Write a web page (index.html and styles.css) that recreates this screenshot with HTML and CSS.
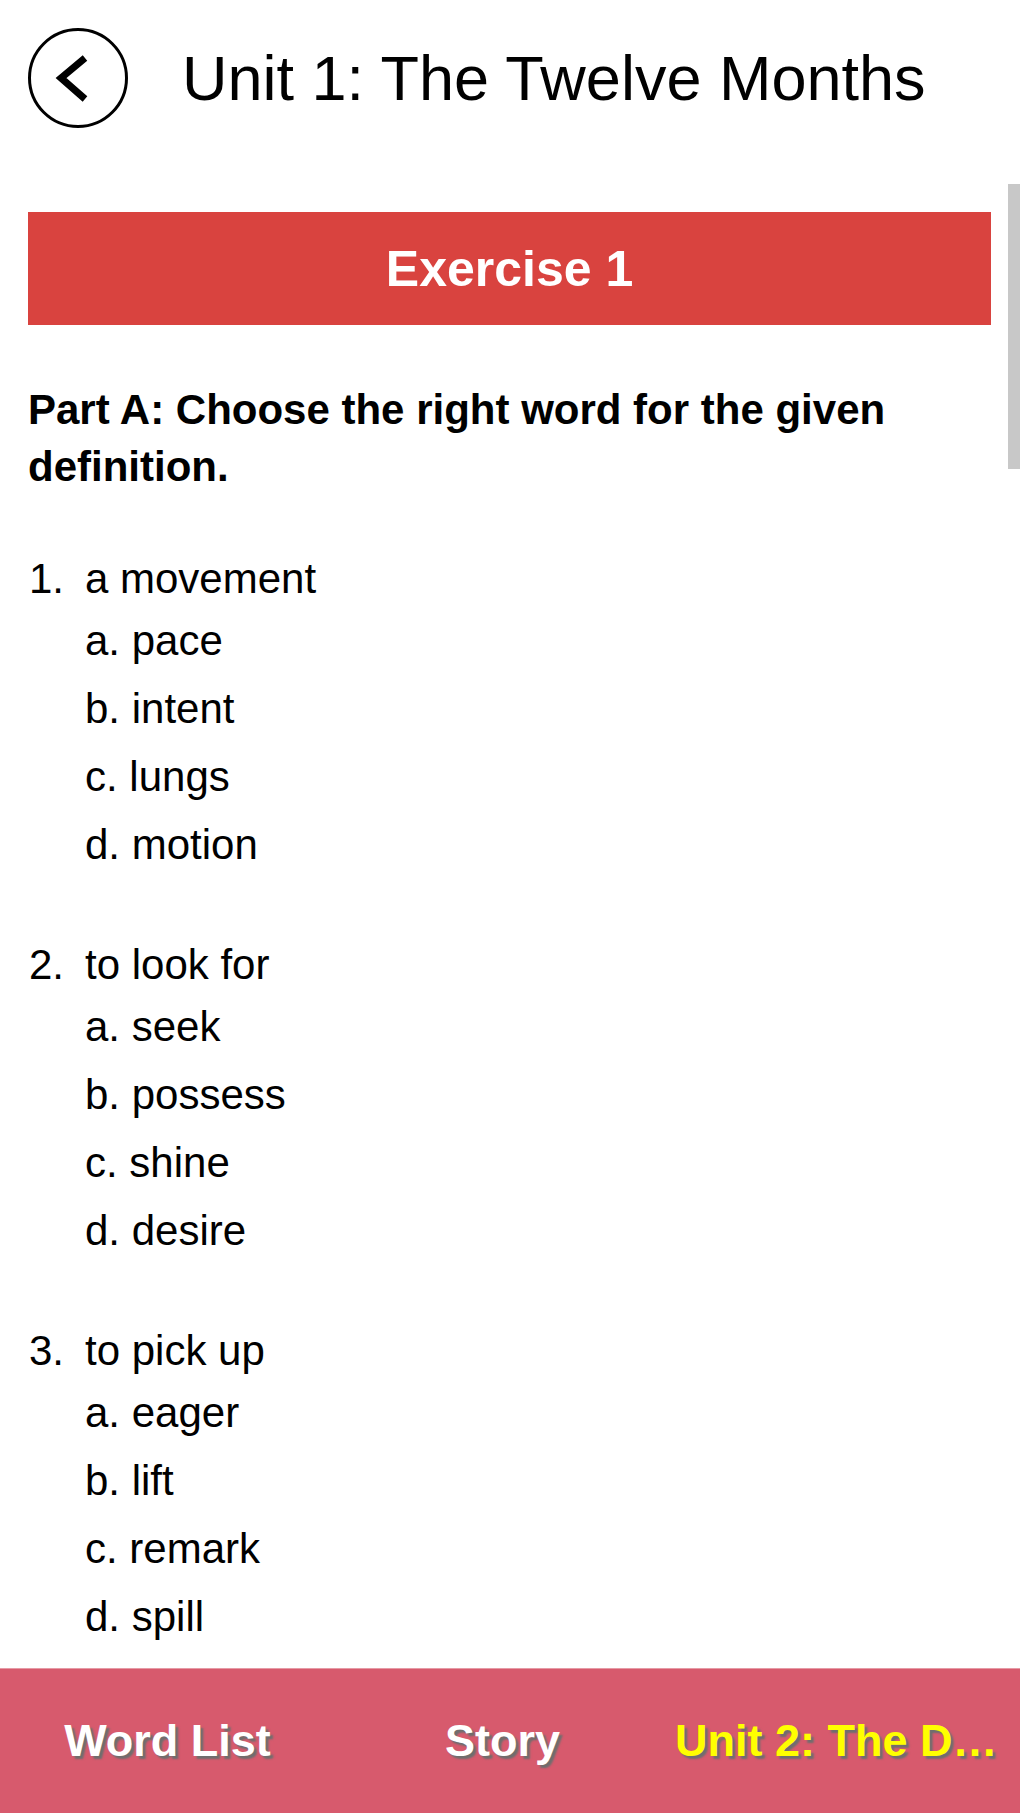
FILE: index.html
```html
<!DOCTYPE html>
<html lang="en">
<head>
<meta charset="utf-8">
<title>Unit 1: The Twelve Months</title>
<link rel="stylesheet" href="styles.css">
</head>
<body>
<div class="app">
  <header class="topbar">
    <button class="back" aria-label="Back">
      <svg viewBox="0 0 100 100" width="100" height="100">
        <circle cx="50" cy="50" r="48.5" fill="none" stroke="#000" stroke-width="3"/>
        <polyline points="57,30 33,50 57,71" fill="none" stroke="#000" stroke-width="7" stroke-linecap="butt" stroke-linejoin="miter"/>
      </svg>
    </button>
    <h1 class="title">Unit 1: The Twelve Months</h1>
  </header>

  <main class="content">
    <div class="scroll-thumb"></div>
    <div class="banner">Exercise 1</div>
    <p class="instructions">Part A: Choose the right word for the given definition.</p>

    <div class="question">
      <div class="q-line"><span class="num">1.</span><span>a movement</span></div>
      <div class="opt">a. pace</div>
      <div class="opt">b. intent</div>
      <div class="opt">c. lungs</div>
      <div class="opt">d. motion</div>
    </div>

    <div class="question">
      <div class="q-line"><span class="num">2.</span><span>to look for</span></div>
      <div class="opt">a. seek</div>
      <div class="opt">b. possess</div>
      <div class="opt">c. shine</div>
      <div class="opt">d. desire</div>
    </div>

    <div class="question">
      <div class="q-line"><span class="num">3.</span><span>to pick up</span></div>
      <div class="opt">a. eager</div>
      <div class="opt">b. lift</div>
      <div class="opt">c. remark</div>
      <div class="opt">d. spill</div>
    </div>
  </main>

  <nav class="tabbar">
    <div class="tab">Word List</div>
    <div class="tab">Story</div>
    <div class="tab next">Unit 2: The D…</div>
  </nav>
</div>
</body>
</html>
```

FILE: styles.css
```css
* {
  box-sizing: border-box;
}

html, body {
  margin: 0;
  padding: 0;
  background: #fff;
}

body {
  font-family: "Liberation Sans", Arial, sans-serif;
  color: #000;
}

.app {
  width: 1020px;
  height: 1813px;
  display: flex;
  flex-direction: column;
  overflow: hidden;
}

.topbar {
  height: 184px;
  flex: none;
  display: flex;
  align-items: flex-start;
  padding: 28px 0 0 28px;
  gap: 54px;
}

.back {
  width: 100px;
  height: 100px;
  padding: 0;
  border: 0;
  background: none;
  flex: none;
}

.back svg {
  display: block;
}

.title {
  margin: 0;
  font-size: 63px;
  font-weight: normal;
  line-height: 100px;
  white-space: nowrap;
}

.content {
  position: relative;
  flex: 1;
  overflow: hidden;
  padding: 28px 29px 0 28px;
}

.scroll-thumb {
  position: absolute;
  top: 0;
  right: 0;
  width: 12px;
  height: 285px;
  background: #c8c8c8;
}

.banner {
  height: 113px;
  background: #d9433f;
  color: #fff;
  font-weight: bold;
  font-size: 50px;
  display: flex;
  align-items: center;
  justify-content: center;
}

.instructions {
  margin: 56px 0 55px;
  font-size: 42px;
  font-weight: bold;
  line-height: 57px;
}

.question {
  font-size: 42px;
  margin-bottom: 57px;
}

.q-line {
  display: flex;
  line-height: 57px;
}

.num {
  width: 57px;
  flex: none;
  padding-left: 1px;
}

.opt {
  line-height: 68px;
  padding-left: 57px;
}

.tabbar {
  flex: none;
  height: 145px;
  background: #d75a6d;
  border-top: 1px solid #e69aa5;
  display: grid;
  grid-template-columns: 335px 335px 350px;
  align-items: center;
}

.tab {
  padding: 0 5px;
  color: #fff;
  font-weight: bold;
  font-size: 45px;
  line-height: 60px;
  text-align: center;
  text-shadow: 3px 3px 2px #6e6e6e;
  white-space: nowrap;
}

.tab.next {
  color: #ffff00;
  text-align: left;
}
```
